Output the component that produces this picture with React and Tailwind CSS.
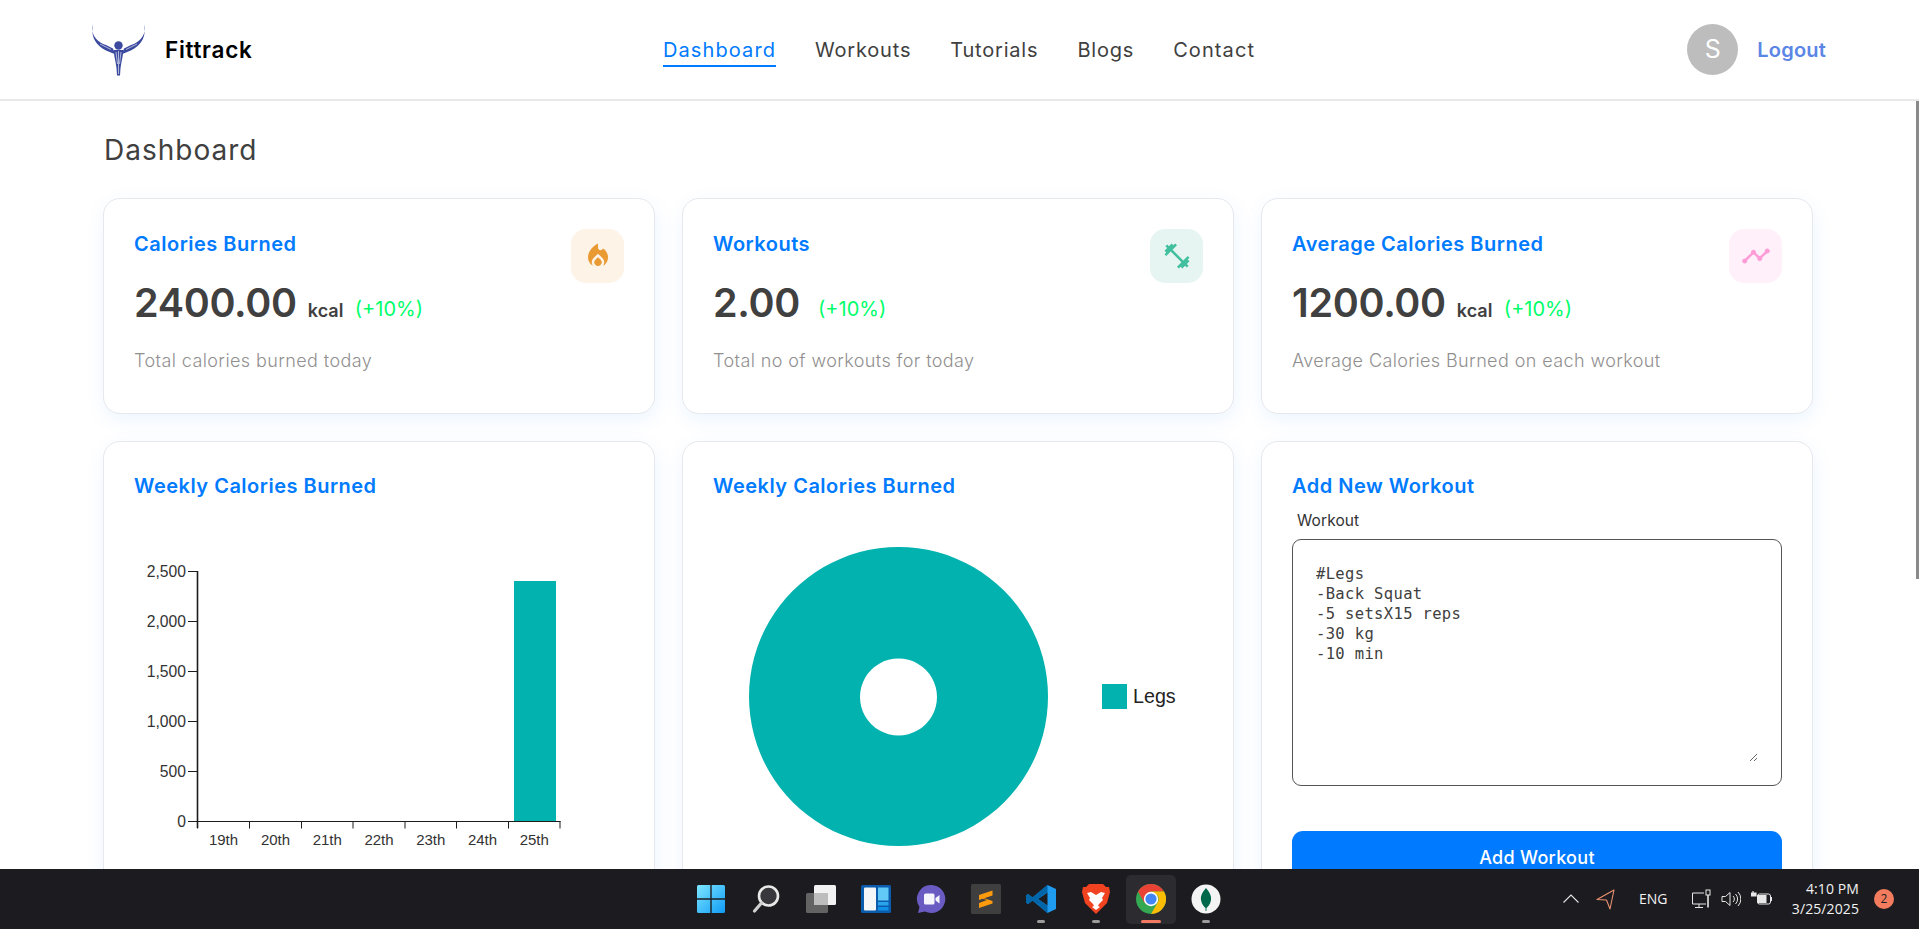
import React from "react";
import { MdLocalFireDepartment, MdFitnessCenter, MdTimeline } from "react-icons/md";

const sans = "font-['Inter','Noto_Sans',sans-serif]";

function Logo() {
  return (
    <svg width="54" height="52" viewBox="0 0 54 52" className="shrink-0">
      <g fill="#3b4a9f">
        <path d="M0.5 0.5 C-1.5 11 5 18 14 21 L21 24.5 L23 30 C14 27 2 22 0.5 9 Z" />
        <path d="M52.5 0.5 C54.5 11 48 18 39 21 L32 24.5 L30 30 C39 27 51 22 52.5 9 Z" />
        <circle cx="26.5" cy="21.5" r="4.2" />
        <path d="M21.5 26 L31.5 26 L30.5 33 L29.5 38 L28.5 44 L28 51.5 L25 51.5 L24.5 44 L23.5 38 L22.5 33 Z" />
      </g>
      <path d="M26.5 27 V50 M24 28 L25.5 40 M29 28 L27.5 40 M8 20 L19 25.5 M45 20 L34 25.5" stroke="#ffffff" strokeWidth="0.6" fill="none" />
    </svg>
  );
}

const card = "rounded-[17px] border border-[#e6e8ee] bg-white shadow-[1px_6px_20px_0px_rgba(0,122,255,0.08)]";
const heading = "text-[20px] leading-[31px] font-semibold tracking-[0.5px] text-[#007aff]";

function Stat({ title, value, unit, desc, icon, iconClass }) {
  return (
    <div className={"flex h-[216px] flex-1 justify-between p-[30px] " + card}>
      <div className="flex flex-col">
        <div className={heading}>{title}</div>
        <div className="mt-[18px] flex items-baseline text-[#404040]">
          <span className="text-[39.5px] leading-[50px] font-semibold tracking-[-0.3px]">{value}</span>
          <span className={unit ? "ml-[11px] w-[37px] text-[18px] font-semibold" : "ml-[8px] w-[0px]"}>{unit}</span>
          <span className="relative -top-px ml-[10px] text-[20px] text-[#00ff6a]">(+10%)</span>
        </div>
        <div className="mt-[21px] text-[18px] leading-[24px] font-light tracking-[0.4px] text-[#918f8f]">{desc}</div>
      </div>
      <div className={"flex h-[54px] w-[53px] items-center justify-center rounded-[15px] " + iconClass}>{icon}</div>
    </div>
  );
}

function BarChart() {
  const ox = 134, oy = 520;
  const yTicks = [["2,500", 572], ["2,000", 622], ["1,500", 672], ["1,000", 722], ["500", 772], ["0", 822]];
  const xTicks = [197.5, 249.5, 301.5, 353, 405, 456.5, 508.5, 560];
  const labels = [19, 20, 21, 22, 23, 24, 25].map((n) => `${n}th`);
  return (
    <svg width="490" height="340" viewBox={`${ox} ${oy} 490 340`} className="mt-[17px] block font-['Liberation_Sans',sans-serif]">
      <rect x="514" y="582" width="42" height="240" fill="#02b2af" />
      <path d="M197.5 572 V829" stroke="#1c1c1c" strokeWidth="1.6" fill="none" />
      <path d="M197.5 822.5 H560.5" stroke="#1c1c1c" strokeWidth="1.1" fill="none" />
      {yTicks.map(([t, y]) => (
        <g key={t}>
          <line x1="188" x2="197" y1={y + 0.5} y2={y + 0.5} stroke="#1c1c1c" />
          <text x="186" y={y + 5.5} textAnchor="end" fontSize="15.7" fill="#333">{t}</text>
        </g>
      ))}
      {xTicks.map((x) => (
        <line key={x} x1={x} x2={x} y1="822" y2="829.5" stroke="#1c1c1c" />
      ))}
      {labels.map((t, i) => (
        <text key={t} x={(xTicks[i] + xTicks[i + 1]) / 2} y="845.5" textAnchor="middle" fontSize="15" fill="#333">{t}</text>
      ))}
    </svg>
  );
}

function PieChart() {
  return (
    <svg width="490" height="340" viewBox="713 520 490 340" className="mt-[17px] block font-['Liberation_Sans',sans-serif]">
      <path
        fillRule="evenodd"
        fill="#02b2af"
        d="M898.5 548 a149.5 149.5 0 1 0 0.01 0 Z M898.5 659.5 a38.5 38.5 0 1 1 -0.01 0 Z"
      />
      <rect x="1102" y="685" width="25" height="25" fill="#02b2af" />
      <text x="1133" y="704" fontSize="19.7" fill="#222">Legs</text>
    </svg>
  );
}

function Taskbar() {
  const slot = "relative flex h-[49px] w-[50px] items-center justify-center";
  const dot = "absolute bottom-[1px] h-[3px] w-[8px] rounded-full bg-[#9b9b9b]";
  return (
    <div className="relative flex h-[60px] shrink-0 items-center bg-[#1c1c20] font-['Open_Sans',sans-serif] text-white">
      <div className="ml-[686px] flex items-center gap-[5px]">
        <div className={slot}>
          <svg width="30" height="30" viewBox="0 0 30 30">
            <defs>
              <linearGradient id="w" x1="0" y1="0" x2="1" y2="1"><stop offset="0" stopColor="#7ee6ff" /><stop offset="1" stopColor="#0f9bf5" /></linearGradient>
            </defs>
            <path d="M1 2.5A1.5 1.5 0 0 1 2.5 1H14.3V14.3H1Z M15.7 1H27.5A1.5 1.5 0 0 1 29 2.5V14.3H15.7Z M1 15.7H14.3V29H2.5A1.5 1.5 0 0 1 1 27.5Z M15.7 15.7H29V27.5A1.5 1.5 0 0 1 27.5 29H15.7Z" fill="url(#w)" />
          </svg>
        </div>
        <div className={slot}>
          <svg width="30" height="30" viewBox="0 0 30 30">
            <circle cx="17.5" cy="12" r="9.5" fill="#38383c" stroke="#e9e9e9" strokeWidth="2.6" />
            <path d="M10.5 19 L3.5 27" stroke="#cfcfcf" strokeWidth="3.2" strokeLinecap="round" />
          </svg>
        </div>
        <div className={slot}>
          <svg width="30" height="30" viewBox="0 0 30 30">
            <rect x="8" y="1" width="22" height="20" rx="1.5" fill="#f2f2f2" />
            <rect x="0" y="9" width="22" height="20" rx="1.5" fill="#6b6b6b" fillOpacity="0.9" />
            <rect x="8" y="9" width="14" height="12" fill="#bdbdbd" />
          </svg>
        </div>
        <div className={slot}>
          <svg width="30" height="30" viewBox="0 0 30 30">
            <rect x="0" y="1" width="30" height="28" rx="1.5" fill="#0b5cad" />
            <rect x="3" y="3.5" width="12" height="23" rx="1" fill="#f4f6f8" />
            <rect x="17" y="3.5" width="10.5" height="13" fill="#62c8f5" />
            <rect x="17" y="18" width="10.5" height="3.5" fill="#29a3ec" />
            <rect x="17" y="23" width="10.5" height="3.5" fill="#0f8fe6" />
          </svg>
        </div>
        <div className={slot}>
          <svg width="30" height="30" viewBox="0 0 30 30">
            <path d="M15.5 1 A14 14 0 1 1 9 27.5 L2 29 L3.5 23 A14 14 0 0 1 15.5 1 Z" fill="#6a5bc2" />
            <rect x="8" y="9.5" width="10.5" height="11" rx="1.5" fill="#f5f5fb" />
            <path d="M19.5 14 L23.5 11 V19.5 L19.5 16.5 Z" fill="#f5f5fb" />
          </svg>
        </div>
        <div className={slot}>
          <svg width="30" height="30" viewBox="0 0 30 30">
            <rect x="0" y="0" width="30" height="30" rx="1.5" fill="#3f3f3f" />
            <path d="M8 11 L21.5 6.5 V11.5 L8 16 Z M8 12.5 L21.5 17 V19.5 L8 24 V19 L16 16 L8 13.5 Z" fill="#fb9a0c" />
          </svg>
        </div>
        <div className={slot}>
          <svg width="30" height="30" viewBox="0 0 30 30">
            <path d="M21.5 1 L30 5 V25 L21.5 29 L6.5 16.5 L2 20 L0 18.5 V11.5 L2 10 L6.5 13.5 Z M21.5 8.5 L12 15 L21.5 21.5 Z" fill="#1f9cf0" />
            <path d="M21.5 1 L6.5 13.5 L2 10 L0 11.5 V18.5 L2 20 L6.5 16.5 L21.5 29 L21.5 21.5 L12 15 L21.5 8.5 Z" fill="#0065a9" />
          </svg>
          <div className={dot} />
        </div>
        <div className={slot}>
          <svg width="28" height="30" viewBox="0 0 28 30">
            <path d="M7 0 H21 L24 3 L27 3 L28 8 L25 19 L14 30 L3 19 L0 8 L1 3 L4 3 Z" fill="#f1431f" />
            <path d="M14 11 L9 8 L5 9 L8 14 L7 16 L11 20 L12 22 L10 23 L14 26 L18 23 L16 22 L17 20 L21 16 L20 14 L23 9 L19 8 Z" fill="#ffffff" />
          </svg>
          <div className={dot} />
        </div>
        <div className={slot + " rounded-[5px] bg-[#2b2b30]"}>
          <svg width="30" height="30" viewBox="0 0 30 30">
            <circle cx="15" cy="15" r="15" fill="#34a853" />
            <path d="M15 0 A15 15 0 0 1 28 7.5 L15 7.5 A7.5 7.5 0 0 0 8.5 11.2 L2 7.5 A15 15 0 0 1 15 0 Z" fill="#ea4335" />
            <path d="M2 7.5 L8.5 19 L15 7.5 Z" fill="#ea4335" />
            <path d="M28 7.5 A15 15 0 0 1 15 30 L21.5 18.8 A7.5 7.5 0 0 0 21.5 11.2 L15 7.5 Z" fill="#fbbc04" />
            <circle cx="15" cy="15" r="7.2" fill="#ffffff" />
            <circle cx="15" cy="15" r="5.6" fill="#4285f4" />
          </svg>
          <div className="absolute bottom-[1px] h-[3px] w-[20px] rounded-full bg-[#f27a62]" />
        </div>
        <div className={slot}>
          <svg width="30" height="30" viewBox="0 0 30 30">
            <circle cx="15" cy="15" r="14.5" fill="#f4f4f4" />
            <path d="M15 4 C19 8.5 20.5 12 20 16 C19.5 20 17 22.5 15.5 24 L15.4 27 H14.6 L14.5 24 C13 22.5 10.5 20 10 16 C9.5 12 11 8.5 15 4 Z" fill="#00684a" />
          </svg>
          <div className={dot} />
        </div>
      </div>

      <svg width="16" height="10" viewBox="0 0 16 10" className="absolute left-[1563px] top-[25px]">
        <path d="M0.5 8.5 L8 1 L15.5 8.5" stroke="#e6e6e6" strokeWidth="1.1" fill="none" />
      </svg>
      <svg width="19" height="21" viewBox="0 0 19 21" className="absolute left-[1596px] top-[20px]">
        <path d="M18 1 L1 10.5 L10.5 11 L14 20 Z" stroke="#e9906f" strokeWidth="1.1" fill="none" strokeLinejoin="round" />
      </svg>
      <span className="absolute left-[1639px] top-[21px] text-[14px] leading-[18px] text-[#f2f2f2]">ENG</span>
      <svg width="20" height="20" viewBox="0 0 20 20" className="absolute left-[1691px] top-[20px]" fill="none" stroke="#e8e8e8" strokeWidth="1">
        <path d="M13 4 H1.5 V15 H15 M8 15 V18 M4 18.5 H12" />
        <rect x="15" y="1" width="4" height="5" />
        <path d="M17 6 V18.5" strokeWidth="1.6" />
      </svg>
      <svg width="20" height="16" viewBox="0 0 20 16" className="absolute left-[1721px] top-[22px]" fill="none" stroke="#e8e8e8" strokeWidth="1">
        <path d="M1 5.5 H4.5 L9 1.5 V14.5 L4.5 10.5 H1 Z" />
        <path d="M12 5 A4 4 0 0 1 12 11 M14.5 3 A7 7 0 0 1 14.5 13 M17 1 A10 10 0 0 1 17 15" />
      </svg>
      <svg width="21" height="16" viewBox="0 0 21 16" className="absolute left-[1751px] top-[21px]">
        <rect x="6.5" y="4" width="13" height="10" rx="2" fill="none" stroke="#e8e8e8" />
        <rect x="6.5" y="5" width="9" height="8" fill="#e8e8e8" />
        <rect x="20" y="7" width="1" height="4" fill="#e8e8e8" />
        <path d="M0 4 H5 M2 1 V4 M0 3 H5 V6 H0 Z" stroke="#e8e8e8" strokeWidth="1.2" fill="#e8e8e8" />
      </svg>

      <div className="absolute right-[60px] top-[10px] text-right text-[14px] leading-[20px] tracking-[0.1px] text-[#f2f2f2]">
        <div>4:10 PM</div>
        <div>3/25/2025</div>
      </div>
      <div className="absolute left-[1874px] top-[20px] flex h-[20px] w-[20px] items-center justify-center rounded-full bg-[#f47c5e] text-[12px] text-[#1c1c20]">2</div>
    </div>
  );
}

export default function App() {
  const navItem = "border-b-2 border-transparent pt-[4px] pb-[1px]";
  return (
    <div className={"relative flex h-[929px] flex-col overflow-hidden bg-white " + sans}>
      <nav className="flex h-[101px] shrink-0 items-center border-b-2 border-[#e9e9e9] bg-white pr-[93px] pl-[92px]">
        <div className="flex w-[571px] items-center gap-[19px]">
          <Logo />
          <span className="text-[22.5px] font-semibold tracking-[0.7px] text-black">Fittrack</span>
        </div>
        <div className="flex items-center gap-[39px] text-[20px] leading-[28px] tracking-[0.8px] text-[#404040]">
          <span className="border-b-2 border-[#007aff] pt-[4px] pb-[1px] tracking-[1.1px] text-[#007aff]">Dashboard</span>
          <span className={navItem}>Workouts</span>
          <span className={navItem}>Tutorials</span>
          <span className={navItem}>Blogs</span>
          <span className={navItem + " tracking-[1.1px]"}>Contact</span>
        </div>
        <div className="ml-auto flex items-center gap-[19px]">
          <div className="flex h-[51px] w-[51px] items-center justify-center rounded-full bg-[#bdbdbd] text-[25px] text-white">S</div>
          <span className="text-[20px] font-semibold tracking-[0.2px] text-[#5b86e5]">Logout</span>
        </div>
      </nav>

      <main className="relative min-h-0 flex-1 overflow-hidden pr-[106px] pl-[103px]">
        <h1 className="mt-[31px] pl-px text-[28px] leading-[36px] font-normal tracking-[1px] text-[#404040]">Dashboard</h1>
        <div className="mt-[30px] flex gap-[27px]">
          <Stat
            title="Calories Burned"
            value="2400.00"
            unit="kcal"
            desc="Total calories burned today"
            iconClass="bg-[#fdf3e7] text-[#e99a33]"
            icon={<MdLocalFireDepartment size={30} />}
          />
          <Stat
            title="Workouts"
            value="2.00"
            unit=""
            desc="Total no of workouts for today"
            iconClass="bg-[#e6f5f1] text-[#41bf9f]"
            icon={<MdFitnessCenter size={30} />}
          />
          <Stat
            title="Average Calories Burned"
            value="1200.00"
            unit="kcal"
            desc="Average Calories Burned on each workout"
            iconClass="bg-[#fff0f9] text-[#ff9cd8]"
            icon={<MdTimeline size={30} />}
          />
        </div>
        <div className="mt-[27px] flex gap-[27px]">
          <div className={"h-[500px] flex-1 p-[30px] pt-[29px] pb-0 " + card}>
            <div className={heading}>Weekly Calories Burned</div>
            <BarChart />
          </div>
          <div className={"h-[500px] flex-1 p-[30px] pt-[29px] pb-0 " + card}>
            <div className={heading}>Weekly Calories Burned</div>
            <PieChart />
          </div>
          <div className={"h-[500px] flex-1 p-[30px] pt-[29px] pb-0 " + card}>
            <div className={heading}>Add New Workout</div>
            <label className="mt-[9px] block pl-[5px] text-[15.5px] leading-[20px] tracking-[0.1px] text-[#333]">Workout</label>
            <div className="mt-[8px] h-[247px] rounded-[9px] border border-[#555] p-[23px]">
              <textarea
                className="block h-full w-full pt-px font-['DejaVu_Sans_Mono',monospace] text-[15.5px] leading-[20px] tracking-[0.35px] text-[#404040] outline-none"
                defaultValue={"#Legs\n-Back Squat\n-5 setsX15 reps\n-30 kg\n-10 min"}
              />
            </div>
            <button className="mt-[45px] h-[52px] w-full rounded-[11px] bg-[#007aff] text-[18px] font-medium tracking-[0.3px] text-white">Add Workout</button>
          </div>
        </div>
        <div className="absolute top-0 right-0 h-[478px] w-[3px] bg-[#8a8a8a]" />
      </main>
      <Taskbar />
    </div>
  );
}
